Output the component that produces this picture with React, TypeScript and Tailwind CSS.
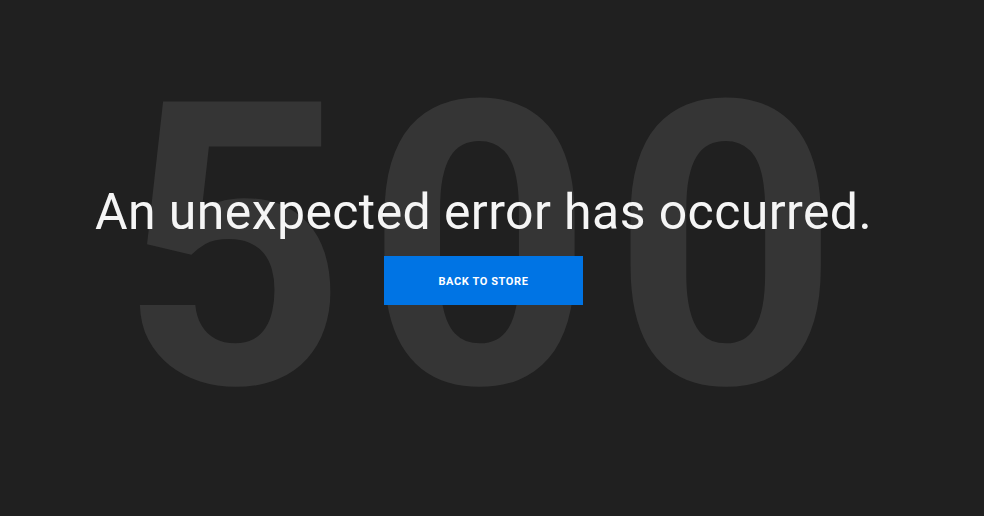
import React from 'react';

const App: React.FC = () => {
  return (
    <div className="relative h-[516px] w-full overflow-hidden bg-[#202020]" style={{ fontFamily: 'Roboto, "Liberation Sans", sans-serif' }}>
      {/* big background code */}
      <div className="pointer-events-none absolute top-[50px] left-0 flex w-[967px] justify-center select-none">
        <span className="pl-[11px] text-[396px] leading-none font-bold tracking-[19px] text-[#353535]">500</span>
      </div>

      <div className="relative flex w-[967px] flex-col items-center pt-[180px]">
        <h1 className="text-[50px] leading-[64px] font-normal tracking-[0.4px] text-[#f5f5f5]">
          An unexpected error has occurred.
        </h1>
        <button className="mt-[12px] h-[49px] w-[199px] bg-[#0074e4] pt-[3px] text-[11px] font-bold tracking-[0.6px] text-white uppercase">
          Back to store
        </button>
      </div>
    </div>
  );
};

export default App;
